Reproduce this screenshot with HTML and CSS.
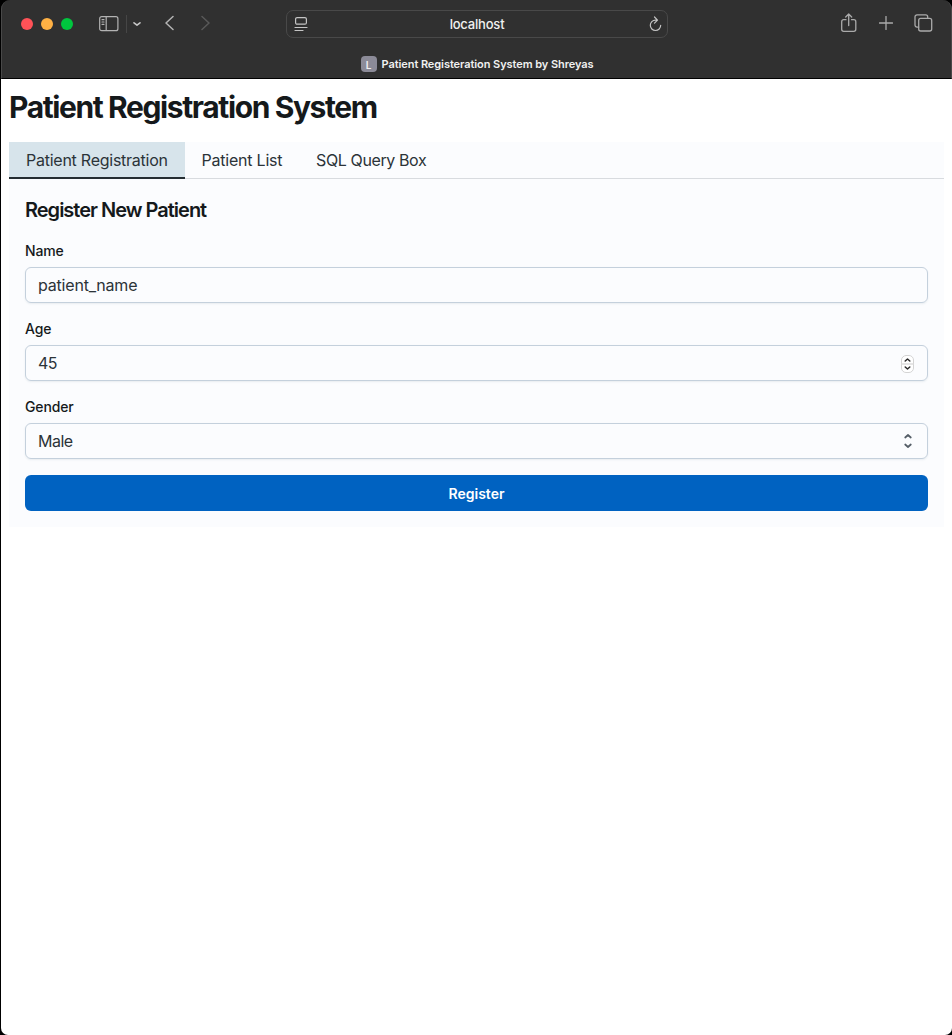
FILE: index.html
```html
<!DOCTYPE html>
<html lang="en">
<head>
<meta charset="utf-8">
<title>Patient Registeration System by Shreyas</title>
<link rel="stylesheet" href="styles.css">
</head>
<body>
<div class="window">
  <header class="chrome">
    <div class="toolbar">
      <div class="tools-left">
        <span class="light red"></span><span class="light yellow"></span><span class="light green"></span>
        <svg class="sidebar-icon" width="20" height="16" viewBox="0 0 20 16"><rect x=".7" y=".7" width="18.2" height="14" rx="2"/><path d="M7.2 1v13.5"/><path d="M3 3.7h2M3 6h2M3 8.3h2"/></svg>
        <span class="divider"></span>
        <svg class="caret" width="8" height="6" viewBox="0 0 8 6"><path d="M1 1.800 4 4.200l3-2.400"/></svg>
        <svg class="back" width="9" height="16" viewBox="0 0 9 16"><path d="M8 1.500 1 8l7 6.500"/></svg>
        <svg class="forward" width="9" height="16" viewBox="0 0 9 16"><path d="m1 1.500 7 6.500-7 6.500"/></svg>
      </div>
      <div class="address">
        <svg width="14" height="16" viewBox="0 0 14 16"><rect x="1.600" y="1.600" width="10.800" height="6.600" rx="1.500"/><path d="M1 11.500h12M1 14.500h8"/></svg>
        <span class="host">localhost</span>
        <svg width="14" height="16" viewBox="0 0 14 16"><path d="M8.500 4.100H7.500A5.200 5.200 0 1 0 12.700 9.300M6.500 1l3 3.100-3 3"/></svg>
      </div>
      <div class="tools-right">
        <svg width="16" height="20" viewBox="0 0 16 20"><path d="M5 6.700H2.700a2 2 0 0 0-2 2v7.600a2 2 0 0 0 2 2h10.100a2 2 0 0 0 2-2V8.700a2 2 0 0 0-2-2h-2.300M7.700 12.500V1M4.700 4l3-3 3 3"/></svg>
        <svg width="14" height="14" viewBox="0 0 14 14"><path d="M7 .5v13M.5 7h13"/></svg>
        <svg width="19" height="18" viewBox="0 0 19 18"><path d="M4.700 13.100H3a2 2 0 0 1-2-2V2.900a2 2 0 0 1 2-2h8.700a2 2 0 0 1 2 2v1.500"/><rect x="4.700" y="4.400" width="13" height="12.600" rx="2"/></svg>
      </div>
    </div>
    <div class="page-title"><span class="favicon">L</span><span class="title-text">Patient Registeration System by Shreyas</span></div>
  </header>
  <main class="page">
    <h1>Patient Registration System</h1>
    <nav class="tabs">
      <a class="tab active">Patient Registration</a><a class="tab list">Patient List</a><a class="tab query">SQL Query Box</a>
    </nav>
    <section class="panel">
      <h2>Register New Patient</h2>
      <div class="field"><label>Name</label><div class="control"><span>patient_name</span></div></div>
      <div class="field"><label>Age</label><div class="control"><span class="short">45</span>
        <svg class="stepper" width="13" height="18" viewBox="0 0 13 18"><rect class="shell" x=".5" y=".5" width="12" height="17" rx="4.500"/><path class="split" d="M1 9h11"/><path class="arrow" d="m4.200 6 2.300-2 2.300 2M4.200 12l2.300 2 2.300-2"/></svg>
      </div></div>
      <div class="field"><label>Gender</label><div class="control"><span class="short">Male</span>
        <svg class="chooser" width="10" height="16" viewBox="0 0 10 16"><path d="M2.200 4.500 5 2l2.800 2.500M2.200 11.500 5 14l2.800-2.500"/></svg>
      </div></div>
      <button class="register" type="button">Register</button>
    </section>
  </main>
</div>
</body>
</html>
```
FILE: styles.css
```css
* { box-sizing: border-box; }
body { margin: 0; background: #000; font-family: Inter, "Liberation Sans", sans-serif; color: #15191b; }
svg { display: block; flex: none; fill: none; stroke-linecap: round; stroke-linejoin: round; }
.window { height: 1035px; padding-left: 1px; background: #000; border-radius: 9px 9px 0 0; }
.chrome { height: 79px; background: #303030; border-bottom: 1px solid #000; border-radius: 9px 9px 0 0; border-left: 1px solid #494949; border-right: 1px solid #494949; }
.toolbar { height: 48px; display: grid; grid-template-columns: 284px 382px 1fr; align-items: center; }
.tools-left { display: flex; align-items: center; padding-left: 19px; height: 48px; }
.light { width: 12px; height: 12px; border-radius: 50%; margin-right: 8px; flex: none; }
.red { background: #ff5257; }
.yellow { background: #ffb144; }
.green { background: #00c63e; }
.sidebar-icon { margin-left: 18px; stroke: #b3b3b3; stroke-width: 1.2; }
.divider { width: 1px; height: 18px; background: #464646; margin-left: 7px; }
.caret { margin-left: 6px; stroke: #c6c6c6; stroke-width: 1.6; }
.back { margin: 0 0 2px 24px; stroke: #b4b4b4; stroke-width: 1.5; }
.forward { margin: 0 0 2px 27px; stroke: #595959; stroke-width: 1.5; }
.address { height: 28px; border: 1px solid #494949; border-radius: 7px; display: flex; align-items: center; justify-content: space-between; padding: 0 5px 0 7px; stroke: #c4c4c4; stroke-width: 1.2; }
.host { font-size: 13px; font-weight: 500; letter-spacing: -.2px; color: #f0f0f0; margin-right: 2px; }
.tools-right { display: flex; align-items: center; justify-content: flex-end; padding: 0 18px 2px 0; gap: 21.5px; stroke: #aaa; stroke-width: 1.3; }
.page-title { height: 30px; display: flex; align-items: center; justify-content: center; gap: 5px; color: #f1f1f1; font-size: 11px; font-weight: 600; letter-spacing: -.07px; padding: 2px 0 0 1px; }
.favicon { width: 16px; height: 16px; border-radius: 4px; background: #8c8b98; display: grid; place-items: center; font-size: 10px; font-weight: 600; padding-top: 1px; }
.page { height: 956px; padding: 8px 8px 0; background: #fff; border-radius: 0 0 7px 7px; }
h1 { margin: 0 0 15px; font-size: 30px; line-height: 40px; font-weight: 700; letter-spacing: -1.39px; }
.tabs { height: 37px; display: flex; background: #fbfcfe; border-bottom: 1px solid #d8dbdf; }
.tab { height: 37px; padding: 0 17px; font-size: 16px; line-height: 37px; letter-spacing: -.25px; color: #2b3338; white-space: nowrap; }
.active { width: 176px; background: #d7e4eb; border-bottom: 2px solid #252d32; }
.list { width: 115px; padding-left: 16.5px; letter-spacing: -.22px; }
.query { padding-left: 16px; letter-spacing: -.38px; }
.panel { height: 348px; padding: 16px; background: #fbfcfe; }
h2 { margin: 0 0 16px; font-size: 20px; line-height: 30px; font-weight: 600; letter-spacing: -1px; }
.field { margin-bottom: 16px; }
label { display: block; height: 20px; margin-bottom: 6px; font-size: 14px; line-height: 20px; font-weight: 500; letter-spacing: -.15px; }
.control { height: 36px; border: 1px solid #c4d0dc; border-radius: 6px; display: flex; align-items: center; justify-content: space-between; padding: 0 13px 0 12px; font-size: 16px; letter-spacing: -.2px; color: #2b3338; box-shadow: 0 1px 2px #4560751a; }
.short { letter-spacing: -.5px; }
.stepper { margin-top: 1px; }
.shell { fill: #fff; stroke: #d4d4d4; }
.split { stroke: #ddd; stroke-width: 1.5; }
.arrow { stroke: #292929; stroke-width: 1.5; }
.chooser { stroke: #555e67; stroke-width: 1.7; margin-right: 1px; }
.register { display: block; width: 100%; height: 36px; border: 0; border-radius: 6px; background: #0062c1; color: #fff; font: 600 14px Inter, sans-serif; }
```
